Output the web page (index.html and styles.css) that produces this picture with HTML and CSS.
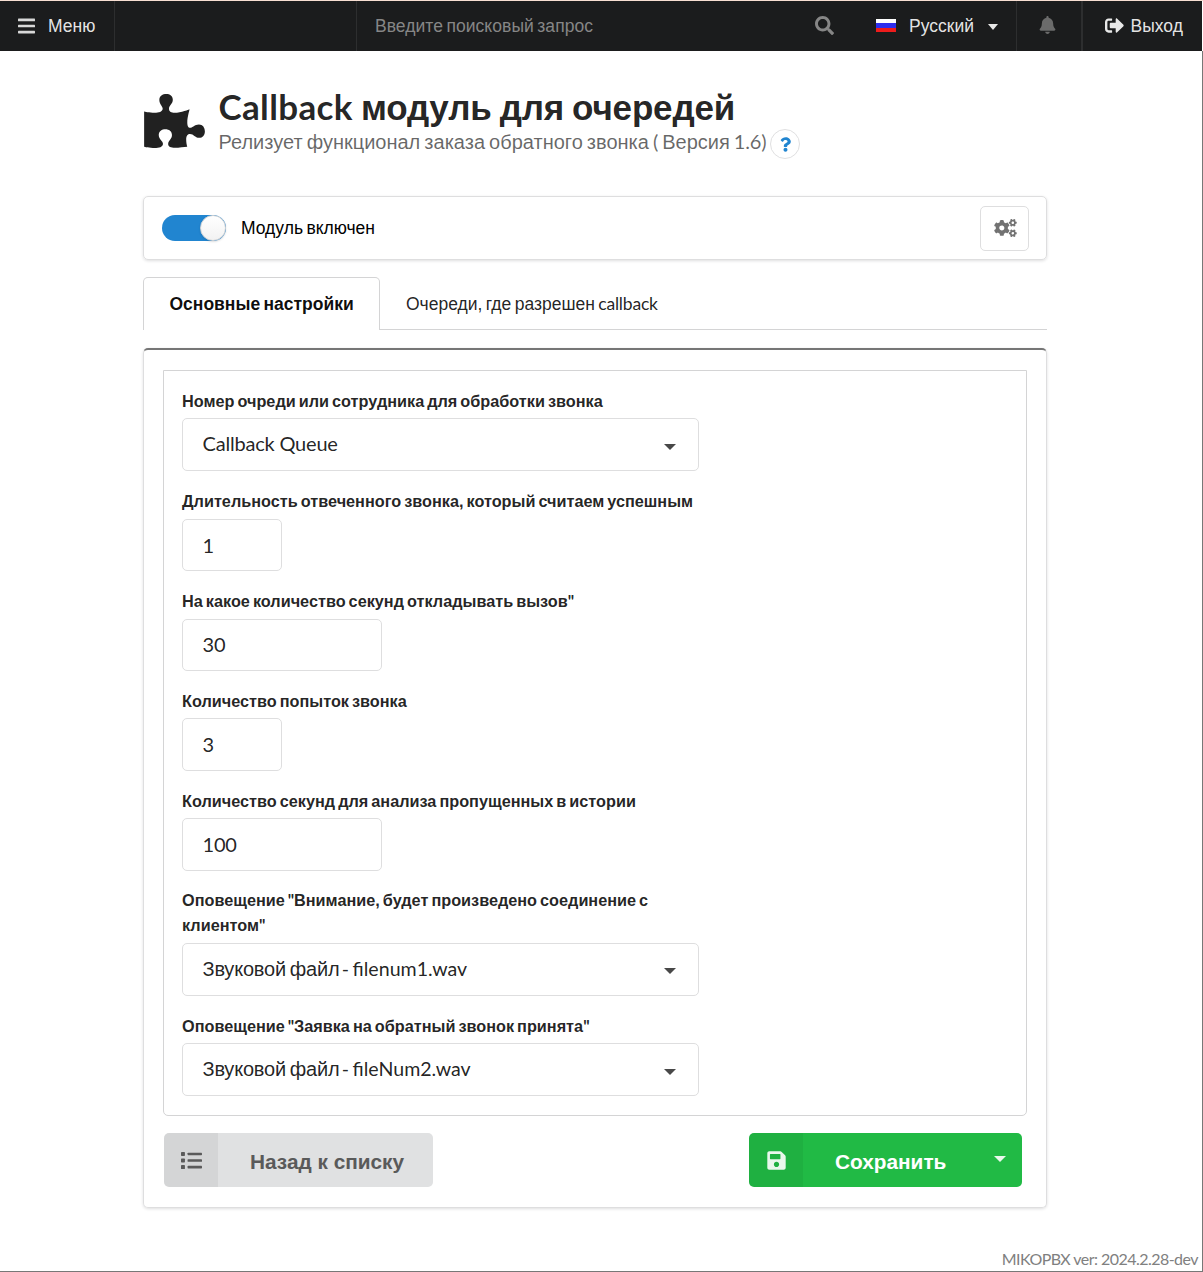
FILE: index.html
```html
<!DOCTYPE html>
<html lang="ru">
<head>
<meta charset="utf-8">
<title>Callback модуль для очередей</title>
<link rel="stylesheet" href="styles.css">
</head>
<body>
<header class="topbar">
  <a class="top-item menu-item">
    <svg class="icon bars" viewBox="0 0 448 512"><rect y="60" width="448" height="72" rx="16"/><rect y="220" width="448" height="72" rx="16"/><rect y="380" width="448" height="72" rx="16"/></svg>
    <span>Меню</span>
  </a>
  <div class="top-gap"></div>
  <div class="top-item search">
    <span class="placeholder">Введите поисковый запрос</span>
    <svg class="icon search-icon" viewBox="0 0 512 512"><path d="M505 442.7L405.3 343c-4.5-4.5-10.6-7-17-7H372c27.6-35.3 44-79.7 44-128C416 93.1 322.9 0 208 0S0 93.1 0 208s93.1 208 208 208c48.3 0 92.7-16.4 128-44v16.3c0 6.4 2.5 12.5 7 17l99.7 99.7c9.4 9.4 24.6 9.4 33.9 0l28.3-28.3c9.4-9.4 9.4-24.6.1-34zM208 336c-70.7 0-128-57.2-128-128 0-70.7 57.2-128 128-128 70.7 0 128 57.2 128 128 0 70.7-57.2 128-128 128z"/></svg>
  </div>
  <div class="top-item lang">
    <span class="flag"></span>
    <span>Русский</span>
    <span class="caret"></span>
  </div>
  <div class="top-item bell">
    <svg class="icon bell-icon" viewBox="0 0 448 512"><path d="M224 512c35.32 0 63.97-28.65 63.97-64H160.03c0 35.35 28.65 64 63.97 64zm215.39-149.71c-19.32-20.76-55.47-51.99-55.47-154.29 0-77.7-54.48-139.9-127.94-155.16V32c0-17.67-14.32-32-31.98-32s-31.98 14.33-31.98 32v20.84C118.56 68.1 64.08 130.3 64.08 208c0 102.3-36.15 133.53-55.47 154.29-6 6.45-8.66 14.16-8.61 21.71.11 16.4 12.98 32 32.1 32h383.8c19.12 0 32-15.6 32.1-32 .05-7.55-2.61-15.27-8.61-21.71z"/></svg>
  </div>
  <a class="top-item logout">
    <svg class="icon out-icon" viewBox="0 0 512 512"><path d="M497 273L329 441c-15 15-41 4.5-41-17v-96H152c-13.3 0-24-10.7-24-24v-96c0-13.3 10.7-24 24-24h136V88c0-21.4 25.9-32 41-17l168 168c9.3 9.4 9.3 24.6 0 34zM192 436v-40c0-6.6-5.4-12-12-12H96c-17.7 0-32-14.3-32-32V160c0-17.7 14.3-32 32-32h84c6.6 0 12-5.4 12-12V76c0-6.6-5.4-12-12-12H96c-53 0-96 43-96 96v192c0 53 43 96 96 96h84c6.6 0 12-5.4 12-12z"/></svg>
    <span>Выход</span>
  </a>
</header>
<main class="page">
  <div class="heading">
    <svg class="puzzle" viewBox="0 0 576 512"><path d="M519.442 288.651c-41.519 0-59.5 31.593-82.058 31.593C377.409 320.244 432 144 432 144s-196.288 80-196.288-3.297c0-35.827 36.288-46.25 36.288-85.985C272 19.216 243.885 0 210.539 0c-34.654 0-66.366 18.891-66.366 56.346 0 41.364 31.711 59.277 31.711 81.75C175.885 207.719 0 166.758 0 166.758v333.237s178.635 41.047 178.635-28.662c0-22.473-40-40.107-40-81.471 0-37.456 29.25-56.346 63.577-56.346 33.673 0 61.788 19.216 61.788 54.717 0 39.735-36.288 50.158-36.288 85.985 0 60.803 129.675 25.73 181.23 25.73 0 0-34.725-120.101 25.827-120.101 35.962 0 46.423 36.152 86.308 36.152C556.712 416 576 387.99 576 354.443c0-34.199-18.962-65.792-56.558-65.792z"/></svg>
    <div>
      <h1><span class="lat">Callback</span> модуль для очередей</h1>
      <div class="sub"><span>Релизует функционал заказа обратного звонка <span class="lat">(</span> Версия <span class="lat">1.6)</span></span>
        <a class="help"><svg class="q" viewBox="0 0 384 512"><path d="M202.021 0C122.202 0 70.503 32.703 29.914 91.026c-7.363 10.58-5.093 25.086 5.178 32.874l43.138 32.709c10.373 7.865 25.132 6.026 33.253-4.148 25.049-31.381 43.63-49.449 82.757-49.449 30.764 0 68.816 19.799 68.816 49.631 0 22.552-18.617 34.134-48.993 51.164-35.423 19.86-82.299 44.576-82.299 106.405V320c0 13.255 10.745 24 24 24h72.471c13.255 0 24-10.745 24-24v-5.773c0-42.86 125.268-44.645 125.268-160.627C377.504 66.256 286.902 0 202.021 0zM192 373.459c-38.196 0-69.271 31.075-69.271 69.271 0 38.195 31.075 69.27 69.271 69.27s69.271-31.075 69.271-69.271-31.075-69.27-69.271-69.27z"/></svg></a>
      </div>
    </div>
  </div>

  <section class="status">
    <span class="toggle"><span class="knob"></span></span>
    <span>Модуль включен</span>
    <a class="gear"><svg class="cogs" viewBox="0 0 640 512"><path id="cog" d="M512.1 191l-8.2 14.3c-3 5.3-9.4 7.5-15.1 5.4-11.8-4.4-22.6-10.7-32.1-18.6-4.6-3.8-5.8-10.5-2.8-15.7l8.2-14.3c-6.9-8-12.3-17.3-15.9-27.4h-16.5c-6 0-11.2-4.3-12.2-10.3-2-12-2.1-24.6 0-37.1 1-6 6.2-10.4 12.2-10.4h16.5c3.6-10.1 9-19.4 15.9-27.4l-8.2-14.3c-3-5.2-1.9-11.9 2.8-15.7 9.5-7.9 20.4-14.2 32.1-18.6 5.7-2.1 12.1.1 15.1 5.4l8.2 14.3c10.5-1.9 21.2-1.9 31.7 0L552 6.3c3-5.3 9.4-7.5 15.1-5.4 11.8 4.4 22.6 10.7 32.1 18.6 4.6 3.8 5.8 10.5 2.8 15.7l-8.2 14.3c6.9 8 12.3 17.3 15.9 27.4h16.5c6 0 11.2 4.3 12.2 10.3 2 12 2.1 24.6 0 37.1-1 6-6.2 10.4-12.2 10.4h-16.5c-3.6 10.1-9 19.4-15.9 27.4l8.2 14.3c3 5.2 1.9 11.9-2.8 15.7-9.5 7.9-20.4 14.2-32.1 18.6-5.7 2.1-12.1-.1-15.1-5.4l-8.2-14.3c-10.4 1.9-21.2 1.9-31.7 0zm-10.5-58.8c38.5 29.6 82.4-14.3 52.8-52.8-38.5-29.7-82.4 14.3-52.8 52.8z"/><use href="#cog" y="299"/><path d="M386.3 286.1l33.7 16.8c10.1 5.8 14.5 18.1 10.5 29.1-8.9 24.2-26.4 46.4-42.6 65.8-7.4 8.9-20.2 11.1-30.3 5.3l-29.1-16.8c-16 13.7-34.6 24.6-54.9 31.7v33.6c0 11.6-8.3 21.6-19.7 23.6-24.6 4.2-50.4 4.4-75.9 0-11.5-2-20-11.9-20-23.6V418c-20.3-7.2-38.9-18-54.9-31.7L74 403c-10 5.8-22.9 3.6-30.3-5.3-16.2-19.4-33.3-41.6-42.2-65.7-4-10.9.4-23.2 10.5-29.1l33.3-16.8c-3.9-20.9-3.9-42.4 0-63.4L12 205.8c-10.1-5.8-14.6-18.1-10.5-29 8.9-24.2 26-46.4 42.2-65.8 7.4-8.9 20.2-11.1 30.3-5.3l29.1 16.8c16-13.7 34.6-24.6 54.9-31.7V57.1c0-11.5 8.2-21.5 19.6-23.5 24.6-4.2 50.5-4.4 76-.1 11.5 2 20 11.9 20 23.6v33.6c20.3 7.2 38.9 18 54.9 31.7l29.1-16.8c10-5.8 22.9-3.6 30.3 5.3 16.2 19.4 33.2 41.6 42.1 65.8 4 10.9.1 23.2-10 29.1l-33.7 16.8c3.9 21 3.9 42.5 0 63.5zm-117.6 21.1c59.2-77-28.7-164.9-105.7-105.7-59.2 77 28.7 164.9 105.7 105.7z"/></svg></a>
  </section>

  <nav class="tabs">
    <a class="tab active"><span>Основные настройки</span></a>
    <a class="tab"><span>Очереди, где разрешен <span class="lat">callback</span></span></a>
  </nav>

  <section class="panel">
    <div class="form">
      <div class="field"><label>Номер очреди или сотрудника для обработки звонка</label>
        <div class="select"><span class="lat">Callback Queue</span><span class="caret"></span></div></div>
      <div class="field"><label>Длительность отвеченного звонка, который считаем успешным</label>
        <input class="input short" value="1"></div>
      <div class="field"><label>На какое количество секунд откладывать вызов<span class="lat">"</span></label>
        <input class="input" value="30"></div>
      <div class="field"><label>Количество попыток звонка</label>
        <input class="input short" value="3"></div>
      <div class="field"><label>Количество секунд для анализа пропущенных в истории</label>
        <input class="input" value="100"></div>
      <div class="field"><label>Оповещение <span class="lat">"</span>Внимание, будет произведено соединение с<br>клиентом<span class="lat">"</span></label>
        <div class="select"><span class="file">Звуковой файл <span class="lat">- filenum1.wav</span></span><span class="caret"></span></div></div>
      <div class="field"><label>Оповещение <span class="lat">"</span>Заявка на обратный звонок принята<span class="lat">"</span></label>
        <div class="select"><span class="file">Звуковой файл <span class="lat">- fileNum2.wav</span></span><span class="caret"></span></div></div>
    </div>
    <div class="actions">
      <a class="btn back">
        <span class="btn-icon"><svg class="list" viewBox="0 0 512 512"><rect y="48" width="96" height="96" rx="16"/><rect y="208" width="96" height="96" rx="16"/><rect y="368" width="96" height="96" rx="16"/><rect x="160" y="64" width="352" height="64" rx="16"/><rect x="160" y="224" width="352" height="64" rx="16"/><rect x="160" y="384" width="352" height="64" rx="16"/></svg></span>
        <span class="btn-text">Назад к списку</span>
      </a>
      <a class="btn save">
        <span class="btn-icon"><svg class="disk" viewBox="0 0 448 512"><path d="M433.941 129.941l-83.882-83.882A48 48 0 0 0 316.118 32H48C21.49 32 0 53.49 0 80v352c0 26.51 21.49 48 48 48h352c26.51 0 48-21.49 48-48V163.882a48 48 0 0 0-14.059-33.941zM224 416c-35.346 0-64-28.654-64-64 0-35.346 28.654-64 64-64s64 28.654 64 64c0 35.346-28.654 64-64 64zm96-304.52V212c0 6.627-5.373 12-12 12H76c-6.627 0-12-5.373-12-12V108c0-6.627 5.373-12 12-12h228.52c3.183 0 6.235 1.264 8.485 3.515l3.48 3.48A11.996 11.996 0 0 1 320 111.48z"/></svg></span>
        <span class="btn-text">Сохранить</span>
        <span class="caret"></span>
      </a>
    </div>
  </section>
</main>
<footer class="footer">MIKOPBX ver: 2024.2.28-dev</footer>
</body>
</html>
```
FILE: styles.css
```css
* { box-sizing: border-box; }
body {
  margin: 0;
  height: 1272px;
  display: flex;
  flex-direction: column;
  overflow: hidden;
  background: #fff;
  border-top: 1px solid #f7ded2;
  border-bottom: 1px solid #777;
  font: 17.5px/25px "Liberation Sans", Arial, sans-serif;
  word-spacing: -.085em;
  color: rgba(0, 0, 0, .87);
}
svg { display: block; fill: currentColor; flex: none; }
span { white-space: nowrap; }
.lat { font-family: Lato, sans-serif; line-height: 0; word-spacing: 0; letter-spacing: -.2px; }

.topbar { display: flex; height: 50px; background: #1b1c1d; color: rgba(255, 255, 255, .9); flex: none; margin-right: 1px; }
.top-item { display: flex; align-items: center; border-right: 1px solid #2d2e2f; }
.menu-item { width: 115px; padding-left: 18px; }
.bars { width: 17px; height: 20px; margin: -1px 13px 0 0; color: #d8d8d8; }
.top-gap { width: 242px; border-right: 1px solid #2d2e2f; }
.search { width: 501px; padding: 0 24px 0 18px; justify-content: space-between; border: 0; color: #868686; }
.placeholder { letter-spacing: .05px; }
.search-icon { width: 19px; height: 19px; margin-top: -2px; }
.lang { width: 159px; padding-left: 18px; }
.flag { width: 20px; height: 13px; margin: -1px 13px 0 0; background: linear-gradient(#fff 0 4px, #2d2dee 4px 9px, #ee1c1c 9px); }
.caret { width: 0; height: 0; border: 5px solid transparent; border-top: 6px solid currentColor; border-bottom: 0; }
.lang .caret { margin-left: 14px; margin-top: 2px; }
.bell { width: 66px; padding-left: 22px; color: #6b6b6b; border-right-width: 2px; }
.bell-icon { width: 17px; height: 18px; margin-top: -2px; }
.logout { flex: 1; border: 0; padding-left: 22px; }
.out-icon { width: 19px; height: 19px; margin: -2px 6.5px 0 0; }

.page { flex: 1; padding: 37px 155px 0 143px; border-right: 1px solid #777; }
.heading { display: flex; height: 108px; padding-left: 1px; }
.puzzle { width: 61px; height: 54px; margin: 6px 13.5px 0 0; }
h1 { margin: 0; font-size: 35px; line-height: 39px; font-weight: 700; letter-spacing: -.17px; }
h1 .lat { letter-spacing: .35px; }
.sub { display: flex; font-size: 20px; line-height: 30px; color: rgba(0, 0, 0, .6); }
.help { width: 30px; height: 30px; margin: 2px 0 0 4px; border: 1px solid #e0e0e1; border-radius: 50%; display: flex; align-items: center; justify-content: center; color: #2185d0; }
.q { width: 11px; height: 15px; }

.status { display: flex; align-items: center; height: 64px; padding: 0 17px 0 18px; border: 1px solid #dededf; border-radius: 5px; box-shadow: 0 1px 3px rgba(34, 36, 38, .15); color: #000; }
.toggle { width: 64px; height: 26px; border-radius: 13px; background: #2185d0; display: flex; justify-content: flex-end; margin-right: 15px; }
.knob { width: 26px; height: 26px; border-radius: 50%; background: linear-gradient(#fff, #f2f2f2); border: 1px solid #d4d4d5; box-shadow: 0 1px 2px rgba(34, 36, 38, .15); }
.gear { margin-left: auto; width: 49px; height: 45px; border: 1px solid #dededf; border-radius: 5px; display: flex; align-items: center; justify-content: center; color: #727272; padding-left: 2px; }
.cogs { width: 23px; height: 18px; }

.tabs { display: flex; height: 53px; margin-top: 17px; border-bottom: 1px solid #d4d4d5; }
.tab { height: 52px; padding: 2px 26px 0; display: flex; align-items: center; }
.tab.active { width: 237px; height: 53px; padding: 1px 0 0 25.5px; border: 1px solid #d4d4d5; border-bottom: 0; border-radius: 5px 5px 0 0; background: #fff; font-weight: 700; color: rgba(0, 0, 0, .95); }

.panel { margin-top: 18px; height: 860px; padding: 20px 19px 0; border: 1px solid #dededf; border-top: 2px solid #767676; border-radius: 5px; box-shadow: 0 1px 3px rgba(34, 36, 38, .15); }
.form { height: 746px; padding: 17.9px 18px 0; border: 1px solid #d4d4d5; border-radius: 0 0 5px 5px; }
.field { width: 517px; margin-bottom: 17.5px; }
label { display: block; margin-bottom: 4.5px; font-size: 16.25px; font-weight: 700; line-height: 25px; }
.select, .input { border: 1px solid #dededf; border-radius: 5px; font-size: 20px; }
.select { height: 53px; margin-bottom: 18px; display: flex; align-items: center; justify-content: space-between; padding: 0 22px 4px 19.5px; }
.select .caret { border-width: 6px 6px 0; border-top-color: #484848; margin-top: 8px; }
.file { letter-spacing: -.2px; padding-top: 4px; }
.file .lat { font-size: 19.6px; letter-spacing: 0; word-spacing: -1.6px; margin-left: -1.5px; }
.input { display: block; width: 200px; height: 52.5px; margin-bottom: 17.75px; padding: 0 19.5px 1px; font-family: Lato, sans-serif; letter-spacing: -.2px; color: inherit; background: #fff; }
.short { width: 100px; }

.actions { display: flex; justify-content: space-between; padding: 17px 5px 0 1px; }
.btn { display: flex; height: 54px; border-radius: 5px; overflow: hidden; align-items: center; font-size: 20.8px; font-weight: 700; }
.btn-icon { width: 54px; height: 54px; background: rgba(0, 0, 0, .05); display: flex; align-items: center; justify-content: center; }
.btn-text { padding: 3px 0 0 32px; word-spacing: 0; }
.back { width: 269px; background: #e0e1e2; color: #5a5a5a; }
.list { width: 21px; height: 21px; }
.save { width: 273px; background: #21ba45; color: #fff; }
.disk { width: 19px; height: 21px; opacity: .9; }
.save .caret { border-width: 6px 6px 0; margin-left: auto; margin-right: 16px; margin-top: -3px; opacity: .9; }

.footer { height: 25px; padding-right: 4px; border-right: 1px solid #777; font: 16px/25px Lato, sans-serif; word-spacing: 0; letter-spacing: -.54px; text-align: right; color: #808080; flex: none; }
```
